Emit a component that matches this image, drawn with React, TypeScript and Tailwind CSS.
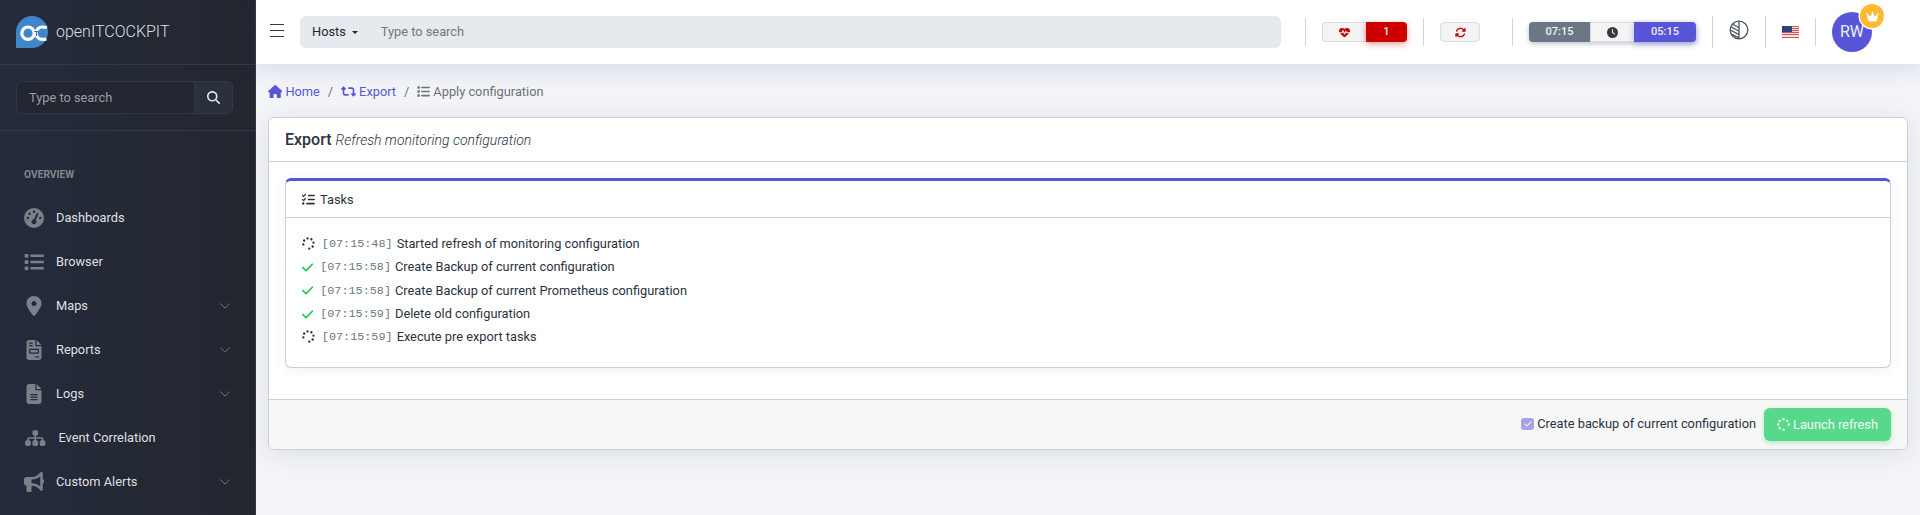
import type { ReactNode } from 'react';
import {
  FaArrowsRotate,
  FaBullhorn,
  FaCheck,
  FaClock,
  FaCrown,
  FaFileInvoice,
  FaFileLines,
  FaGaugeHigh,
  FaHeartPulse,
  FaHouse,
  FaList,
  FaListCheck,
  FaLocationDot,
  FaMagnifyingGlass,
  FaRetweet,
  FaSitemap,
  FaSpinner,
} from 'react-icons/fa6';

type NavEntry = { label: string; icon: ReactNode; expandable?: boolean };

const navEntries: NavEntry[] = [
  { label: 'Dashboards', icon: <FaGaugeHigh className="h-5 w-5" /> },
  { label: 'Browser', icon: <FaList className="h-5 w-5" /> },
  { label: 'Maps', icon: <FaLocationDot className="h-5 w-5" />, expandable: true },
  { label: 'Reports', icon: <FaFileInvoice className="h-5 w-5" />, expandable: true },
  { label: 'Logs', icon: <FaFileLines className="h-5 w-5" />, expandable: true },
  { label: 'Event Correlation', icon: <FaSitemap className="h-[18px] w-[22.5px]" /> },
  { label: 'Custom Alerts', icon: <FaBullhorn className="h-5 w-5" />, expandable: true },
];

const tasks = [
  { time: '07:15:48', text: 'Started refresh of monitoring configuration', done: false },
  { time: '07:15:58', text: 'Create Backup of current configuration', done: true },
  { time: '07:15:58', text: 'Create Backup of current Prometheus configuration', done: true },
  { time: '07:15:59', text: 'Delete old configuration', done: true },
  { time: '07:15:59', text: 'Execute pre export tasks', done: false },
];

function Logo() {
  return (
    <svg viewBox="0 0 32 32" className="h-8 w-8 shrink-0">
      <path d="M0 32V16A16 16 0 1 1 16 32Z" fill="#4186c8" />
      <g fill="none" stroke="#fff" strokeWidth="3.2">
        <circle cx="12" cy="17.2" r="6.2" />
        <path d="M30.8 11.7C29.4 11.1 28 11 26.2 11a6.2 6.2 0 0 0 0 12.4c1.6 0 2.8-.1 4.1-.7" />
      </g>
      <path d="M18 15.5h5M20.5 15.5v4.5" stroke="#5a6fb5" strokeWidth="1" />
    </svg>
  );
}

function Sidebar() {
  return (
    <aside className="flex h-full w-64 shrink-0 flex-col overflow-hidden border-r border-[#323a49] bg-linear-to-r from-[#242b3d] via-[#232934] to-[#23262f] text-white/87">
      <div className="flex h-[65px] shrink-0 items-center gap-2 border-b border-[#323a49] pl-4">
        <Logo />
        <span className="text-base font-light">openITCOCKPIT</span>
      </div>
      <div className="h-[66px] shrink-0 border-b border-[#323a49] px-4 pt-4">
        <div className="flex h-[33px] w-[217px] overflow-hidden rounded-md border border-[#323a49]">
          <div className="flex grow items-center bg-[#212631] pl-3 text-[#9a9da3]">Type to search</div>
          <div className="flex w-[38px] items-center justify-center border-l border-[#323a49] bg-[#2a303d]">
            <FaMagnifyingGlass className="h-[13px] w-[13px]" />
          </div>
        </div>
      </div>
      <div className="mt-[34px] pl-6 text-[10.24px] leading-5 font-bold text-[#81858d]">OVERVIEW</div>
      <nav className="mt-2.5 flex flex-col">
        {navEntries.map((entry) => (
          <div key={entry.label} className="flex h-11 items-center pr-[25px] pl-6 first:h-[45px]">
            <span className="mr-3 text-[#7c8089]">{entry.icon}</span>
            <span className="grow">{entry.label}</span>
            {entry.expandable && (
              <svg viewBox="0 0 10 6" className="h-1.5 w-2.5" fill="none" stroke="#6f747e">
                <path d="M.4.5 5 5.1 9.6.5" />
              </svg>
            )}
          </div>
        ))}
      </nav>
    </aside>
  );
}

function Contrast() {
  return (
    <svg viewBox="0 0 20 20" className="h-5 w-5" fill="none" stroke="#4c545f" strokeWidth="1.3">
      <circle cx="10" cy="10" r="8.8" />
      <path d="M10 1v18M3.8 4.2 10 7.8M2 6.7l8 4.5M1.4 10l8.6 4.6M3 14.3l7 3.6" />
    </svg>
  );
}

function Flag() {
  return (
    <svg viewBox="0 0 17 12" className="h-3 w-[17px]" shapeRendering="crispEdges">
      <path fill="#f3dfe1" d="M0 0h17v12H0z" />
      <path fill="#d0545e" d="M0 0h17v1H0zM0 2h17v1H0zM0 4h17v1H0zM0 6h17v1H0zM0 8h17v1H0zM0 11h17v1H0z" />
      <path fill="#2d4270" d="M0 0h10v6H0z" />
    </svg>
  );
}

function Divider({ tall = false }: { tall?: boolean }) {
  return <div className={`w-px shrink-0 bg-[#d3d4d7] ${tall ? 'h-8' : 'h-7'}`} />;
}

function Header() {
  return (
    <header className="relative flex h-16 shrink-0 items-center bg-white pl-3.5 shadow-[0_4px_22px_rgba(60,75,150,0.16)]">
      <svg viewBox="0 0 14 14" className="-mt-1 h-3.5 w-3.5 shrink-0" stroke="#343c4a" fill="none">
        <path d="M0 1.5h14M0 7.5h14M0 13.5h14" />
      </svg>
      <div className="ml-4 flex h-8 w-[981px] shrink-0 items-center rounded-md bg-[#e6e9ee] pl-3">
        <span className="text-[#212631]">Hosts</span>
        <span className="ml-1.5 h-0 w-0 border-x-[3px] border-t-[3px] border-x-transparent border-t-[#212631]" />
        <span className="ml-[23px] text-[#73777f]">Type to search</span>
      </div>
      <div className="ml-6 flex shrink-0 items-center text-[11px] font-medium">
        <Divider />
        <div className="ml-4 flex h-5">
          <div className="flex w-11 items-center justify-center rounded-l border border-r-0 border-[#dcdcdd] bg-[#f4f4f4] text-[#c80000]">
            <FaHeartPulse className="h-[11px] w-[11px]" />
          </div>
          <div className="flex w-[41px] items-center justify-center rounded-r bg-[#cc0000] text-white/90 shadow-[0_2px_6px_rgba(204,0,0,0.4)]">1</div>
        </div>
        <div className="ml-4"><Divider /></div>
        <div className="ml-4 flex h-5 w-10 items-center justify-center rounded border border-[#dcdcdd] bg-[#f4f4f4] text-[#c80000]">
          <FaArrowsRotate className="h-[11px] w-[11px]" />
        </div>
        <div className="ml-8"><Divider /></div>
        <div className="ml-4 flex h-5 rounded shadow-[0_2px_5px_rgba(60,70,90,0.3)]">
          <div className="flex w-[61px] items-center justify-center rounded-l bg-[#6b7785] text-white/90">07:15</div>
          <div className="flex w-11 items-center justify-center border-y border-l border-[#dcdcdd] bg-[#f4f4f4] text-[#343b47]">
            <FaClock className="h-[11px] w-[11px]" />
          </div>
          <div className="flex w-[62px] items-center justify-center rounded-r bg-[#5856d6] text-white/90 shadow-[0_2px_6px_rgba(88,86,214,0.4)]">05:15</div>
        </div>
        <div className="ml-4"><Divider tall /></div>
        <div className="-mt-1 ml-4"><Contrast /></div>
        <div className="ml-4"><Divider tall /></div>
        <div className="ml-4"><Flag /></div>
        <div className="ml-4"><Divider /></div>
        <div className="relative ml-4 flex h-10 w-10 items-center justify-center rounded-full bg-[#5856d6] text-base font-normal text-white/90">
          RW
          <span className="absolute -top-2 -right-3 flex h-6 w-6 items-center justify-center rounded-full bg-[#fdb92f] text-white shadow-[0_0_0_1.5px_#ffffff]">
            <FaCrown className="h-[13px] w-[13px]" />
          </span>
        </div>
      </div>
    </header>
  );
}

function Breadcrumb() {
  return (
    <div className="flex h-[19px] items-center text-[#5856d6]">
      <FaHouse className="h-[13px] w-[14.4px]" />
      <span className="ml-[3px]">Home</span>
      <span className="mx-2 text-[#6b7079]">/</span>
      <FaRetweet className="h-[15px] w-[15px]" />
      <span className="ml-[3px]">Export</span>
      <span className="mx-2 text-[#6b7079]">/</span>
      <FaList className="h-[13px] w-[13px] text-[#6b7079]" />
      <span className="ml-[3px] text-[#6b7079]">Apply configuration</span>
    </div>
  );
}

function TaskCard() {
  return (
    <section className="h-[190px] overflow-hidden rounded-md border border-t-[3px] border-[#cfd0d4] border-t-[#5856d6] bg-white shadow-[0_2px_12px_rgba(60,75,150,0.08)]">
      <div className="flex h-[37px] items-center gap-[5px] border-b border-[#cfd0d4] pt-0.5 pl-4">
        <FaListCheck className="-mt-0.5 h-[13px] w-[13px]" />
        Tasks
      </div>
      <div className="flex flex-col px-4 pt-[14.5px]">
        {tasks.map((task) => (
          <div key={task.text} className="flex h-[23.3px] items-center">
            {task.done ? (
              <FaCheck className="mr-[7px] h-[13px] w-[11.2px] text-[#12c35b]" />
            ) : (
              <FaSpinner className="-mt-0.5 mr-[7px] h-[13px] w-[12.8px] rotate-170" />
            )}
            <span className="font-['Liberation_Mono',monospace] text-[11.8px] text-[#6b7785]">[{task.time}]</span>
            <span className="ml-[4px]">{task.text}</span>
          </div>
        ))}
      </div>
    </section>
  );
}

export default function App() {
  return (
    <div className="flex h-[515px] w-[1920px] overflow-hidden bg-[#f3f4f7] font-[Roboto,sans-serif] text-[12.8px] leading-5 text-[#2c3340]">
      <Sidebar />
      <div className="flex min-w-0 grow flex-col">
        <Header />
        <main className="flex flex-col px-3 pt-[18px]">
          <Breadcrumb />
          <section className="mt-4 h-[333px] overflow-hidden rounded-md border border-[#cfd0d4] bg-white shadow-[0_4px_22px_rgba(60,75,150,0.12)]">
            <div className="flex h-11 items-center border-b border-[#cfd0d4] pl-4">
              <span className="text-base font-medium">Export</span>
              <span className="ml-1 text-[14px] font-light italic">Refresh monitoring configuration</span>
            </div>
            <div className="h-[237px] px-4 pt-4">
              <TaskCard />
            </div>
            <div className="flex h-[50px] items-center justify-end border-t border-[#cfd0d4] bg-[#f7f7f7] pr-4">
              <div className="-mt-0.5 flex items-center">
                <span className="mr-[3px] flex h-3 w-[13px] items-center justify-center rounded-[3px] bg-[#a5a2e5] text-white">
                  <FaCheck className="h-2 w-2" />
                </span>
                Create backup of current configuration
              </div>
              <button className="ml-2 flex h-[33px] w-[127px] items-center justify-center gap-[3px] rounded-md bg-[#58d88b] text-white/90 shadow-[0_2px_5px_rgba(88,216,139,0.45)]">
                <FaSpinner className="h-[13px] w-[13px] rotate-90" />
                Launch refresh
              </button>
            </div>
          </section>
        </main>
      </div>
    </div>
  );
}
